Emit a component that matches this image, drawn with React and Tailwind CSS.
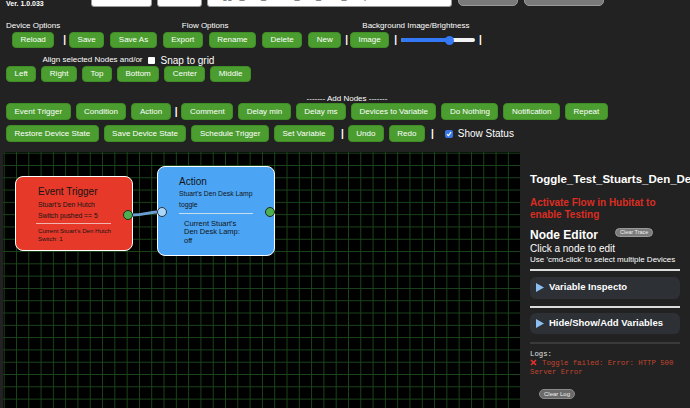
import React from 'react';

// top-bar button, green pill
const Btn = ({ children, tall }) => (
  <button
    className={`${tall ? 'h-[17px]' : 'h-4'} px-[7.5px] rounded-[4px] border border-[#3f8d25] bg-[#4b9d2f] text-white text-[8px] leading-none whitespace-nowrap`}
  >
    {children}
  </button>
);

const Sep = ({ className = '' }) => (
  <span className={`text-white font-bold text-[10px] leading-[16px] ${className}`}>|</span>
);

const Triangle = () => (
  <svg width="8" height="9" viewBox="0 0 8 9" className="shrink-0">
    <path d="M0 0 L8 4.5 L0 9 Z" fill="#8cc0f2" />
  </svg>
);

const Port = ({ className }) => (
  <div className={`absolute w-[10px] h-[10px] rounded-full border border-[#1c2a1c] ${className}`} />
);

export default function App() {
  return (
    <div className="w-[690px] h-[408px] overflow-hidden bg-[#222222] font-['Liberation_Sans',Arial,sans-serif] text-white">
      {/* top strip, mostly scrolled off */}
      <div className="flex items-start h-[8px] overflow-hidden">
        <div className="w-[91px] pl-[6px] text-[7px] leading-[8px] font-bold">Ver. 1.0.033</div>
        <div className="w-[61px] h-[20px] -mt-[13px] flex items-center px-[5px] bg-white border border-[#999] rounded-[3px] text-[9px] text-[#444]">Select Flow</div>
        <div className="ml-[5px] w-[45px] h-[20px] -mt-[13px] flex items-center px-[5px] bg-white border border-[#999] rounded-[3px] text-[9px] text-[#444]">Load</div>
        <div className="ml-[5px] w-[245px] h-[20px] -mt-[13px] flex items-center px-[5px] bg-white border border-[#999] rounded-[3px] text-[9px] text-[#444] whitespace-nowrap overflow-hidden">Toggle_Test_Stuarts_Den_Desk_Lamp</div>
        <div className="ml-[6px] w-[60px] h-[20px] -mt-[14px] flex items-center justify-center bg-[#7a7a7a] border border-[#9a9a9a] rounded-[5px] text-[8px] text-[#ddd]">Deactivate</div>
        <div className="ml-[6px] w-[80px] h-[20px] -mt-[14px] flex items-center justify-center bg-[#7a7a7a] border border-[#9a9a9a] rounded-[5px] text-[8px] text-[#ddd]">Logging Disabled</div>
      </div>

      {/* row 1 */}
      <div className="mt-[13px] pl-[6px] flex items-end">
        <div className="flex flex-col items-center gap-[1px]">
          <div className="text-[8px] leading-[10px] whitespace-nowrap">Device Options</div>
          <Btn>Reload</Btn>
        </div>
        <Sep className="ml-[3px] mr-[3px]" />
        <div className="flex flex-col items-center gap-[1px]">
          <div className="text-[8px] leading-[10px]">Flow Options</div>
          <div className="flex gap-[6px]">
            <Btn>Save</Btn>
            <Btn>Save As</Btn>
            <Btn>Export</Btn>
            <Btn>Rename</Btn>
            <Btn>Delete</Btn>
            <Btn>New</Btn>
          </div>
        </div>
        <Sep className="ml-[4px] mr-[2px]" />
        <div className="flex flex-col items-center gap-[1px]">
          <div className="text-[8px] leading-[10px] whitespace-nowrap">Background Image/Brightness</div>
          <div className="flex items-center">
            <Btn>Image</Btn>
            <Sep className="ml-[5px]" />
            <div className="relative ml-[4px] w-[74px] h-[4px] rounded-full bg-[#f2f2f2]">
              <div className="h-full w-[48px] rounded-full bg-[#3478f6]" />
              <div className="absolute left-[44px] -top-[2.5px] w-[9px] h-[9px] rounded-full bg-[#3478f6]" />
            </div>
            <Sep className="ml-[4px]" />
          </div>
        </div>
      </div>

      {/* row 2 */}
      <div className="mt-[6px] pl-[6px] flex">
        <div className="flex flex-col items-center">
          <div className="h-[12px] flex items-center">
            <span className="text-[8px]">Align selected Nodes and/or</span>
            <span className="ml-[5px] w-[7px] h-[7px] rounded-[1px] bg-white" />
            <span className="ml-[6px] text-[10px]">Snap to grid</span>
          </div>
          <div className="flex gap-[5px]">
            <Btn>Left</Btn>
            <Btn>Right</Btn>
            <Btn>Top</Btn>
            <Btn>Bottom</Btn>
            <Btn>Center</Btn>
            <Btn>Middle</Btn>
          </div>
        </div>
      </div>

      {/* add nodes */}
      <div className="mt-[12px] pl-[6px] pr-[2px] text-center text-[8px] leading-[9px]">------- Add Nodes -------</div>
      <div className="pl-[6px] flex items-center gap-[5px]">
        <Btn tall>Event Trigger</Btn>
        <Btn tall>Condition</Btn>
        <Btn tall>Action</Btn>
        <Sep className="-mx-[1px]" />
        <Btn tall>Comment</Btn>
        <Btn tall>Delay min</Btn>
        <Btn tall>Delay ms</Btn>
        <Btn tall>Devices to Variable</Btn>
        <Btn tall>Do Nothing</Btn>
        <Btn tall>Notification</Btn>
        <Btn tall>Repeat</Btn>
      </div>
      <div className="mt-[5px] pl-[6px] flex items-center gap-[5px]">
        <Btn tall>Restore Device State</Btn>
        <Btn tall>Save Device State</Btn>
        <Btn tall>Schedule Trigger</Btn>
        <Btn tall>Set Variable</Btn>
        <Sep className="ml-[2px] -mr-[1px]" />
        <Btn tall>Undo</Btn>
        <Btn tall>Redo</Btn>
        <Sep className="ml-[1px]" />
        <span className="ml-[6px] w-[8px] h-[8px] rounded-[2px] bg-[#3a78e8] flex items-center justify-center">
          <svg width="6" height="6" viewBox="0 0 6 6">
            <path d="M1 3.2 L2.5 4.6 L5 1.2" stroke="white" strokeWidth="1.2" fill="none" />
          </svg>
        </span>
        <span className="text-[10px] leading-none">Show Status</span>
      </div>

      {/* canvas + side panel */}
      <div className="mt-[10px] h-[256px] flex">
        <div className="relative ml-[3px] w-[517px] h-full overflow-hidden bg-black bg-[linear-gradient(to_right,#1b451a_1px,transparent_1px),linear-gradient(to_bottom,#1b451a_1px,transparent_1px)] bg-[length:12.3px_12.3px] bg-[position:0.7px_0.7px]">
          {/* Event Trigger node */}
          <div className="absolute left-[12px] top-[24px] w-[118px] h-[75px] rounded-[8px] border border-white bg-[#e6392a] pl-[22px] pt-[8.5px] text-[#141414]">
            <div className="text-[10px] leading-[12px]">Event Trigger</div>
            <div className="mt-[1.5px] text-[6.8px] leading-[11px]">Stuart's Den Hutch</div>
            <div className="text-[6.8px] leading-[11px]">Switch pushed == 5</div>
            <div className="mt-[2px] -ml-[2px] h-px w-[75px] bg-[#f1b3ab]" />
            <div className="mt-[3px] text-[6.1px] leading-[7.5px]">
              Current Stuart's Den Hutch
              <br />
              Switch: 1
            </div>
          </div>

          {/* Action node */}
          <div className="absolute left-[154px] top-[14px] w-[118px] h-[90px] rounded-[8px] border border-white bg-[#4ba5f4] pl-[21px] pt-[8.5px] text-[#141414]">
            <div className="text-[10px] leading-[12px]">Action</div>
            <div className="mt-[0.5px] text-[6.8px] leading-[11px]">Stuart's Den Desk Lamp</div>
            <div className="text-[6.8px] leading-[11px]">toggle</div>
            <div className="mt-[2.5px] h-px w-[74px] bg-[#c9dcee]" />
            <div className="mt-[6px] pl-[5px] text-[7.5px] leading-[8.5px]">
              Current Stuart's
              <br />
              Den Desk Lamp:
              <br />
              off
            </div>
          </div>

          {/* connection */}
          <svg className="absolute left-0 top-0" width="517" height="256">
            <path d="M129 63 C 143 63, 144 60, 158 59.7" stroke="#6b9fd3" strokeWidth="3" fill="none" />
          </svg>
          <Port className="left-[120px] top-[58px] bg-[#4caf50]" />
          <Port className="left-[153.5px] top-[54.5px] bg-[#acd6f7] border-[#2a3440]" />
          <Port className="left-[262px] top-[55px] bg-[#4caf50]" />
        </div>

        {/* side panel */}
        <div className="flex-1 overflow-hidden px-[10px]">
          <div className="mt-[20px] text-[11.5px] leading-[14px] font-bold whitespace-nowrap">Toggle_Test_Stuarts_Den_Desk_Lamp</div>
          <div className="mt-[10.5px] text-[10px] leading-[12px] font-bold text-[#db2d22]">
            Activate Flow in Hubitat to
            <br />
            enable Testing
          </div>
          <div className="mt-[7.5px] flex items-start">
            <span className="text-[12px] leading-[14px] font-bold">Node Editor</span>
            <span className="ml-[17px] h-[9px] px-[4px] rounded-full border border-[#9a9a9a] bg-[#7b7b7b] text-[5.5px] leading-[7px] text-[#eee] whitespace-nowrap">Clear Trace</span>
          </div>
          <div className="mt-[0.5px] text-[10px] leading-[12px]">Click a node to edit</div>
          <div className="text-[8px] leading-[10px] whitespace-nowrap">Use 'cmd-click' to select multiple Devices</div>
          <div className="mt-[4px] h-[2px] bg-[#dcdcdc]" />
          <div className="mt-[6px] h-[22px] rounded-[6px] bg-[#2d3035] flex items-center gap-[5px] pl-[6px]">
            <Triangle />
            <span className="text-[9.5px] font-bold whitespace-nowrap">Variable Inspecto</span>
          </div>
          <div className="mt-[7px] h-[2px] bg-[#dcdcdc]" />
          <div className="mt-[5px] h-[21px] rounded-[6px] bg-[#2d3035] flex items-center gap-[5px] pl-[6px]">
            <Triangle />
            <span className="text-[9.5px] font-bold whitespace-nowrap">Hide/Show/Add Variables</span>
          </div>
          <div className="mt-[8px] h-[2px] bg-[#3a3a3a]" />
          <div className="mt-[6px] font-['Liberation_Mono',monospace] text-[7.3px] leading-[9px]">
            <div className="text-[#e0e0e0]">Logs:</div>
            <div className="text-[#c0452f]">
              <svg width="7" height="7" viewBox="0 0 7 7" className="inline-block mr-[5px] -mt-[1px]">
                <path d="M1 1 L6 6 M6 1 L1 6" stroke="#e8322a" strokeWidth="1.6" />
              </svg>
              Toggle failed: Error: HTTP 500
              <br />
              Server Error
            </div>
          </div>
          <div className="mt-[12.5px] ml-[9px] w-fit h-[10px] px-[4px] rounded-full border border-[#8a8a8a] bg-[#6a6a6a] text-[6px] leading-[8px] text-[#eee]">Clear Log</div>
        </div>
      </div>
    </div>
  );
}
